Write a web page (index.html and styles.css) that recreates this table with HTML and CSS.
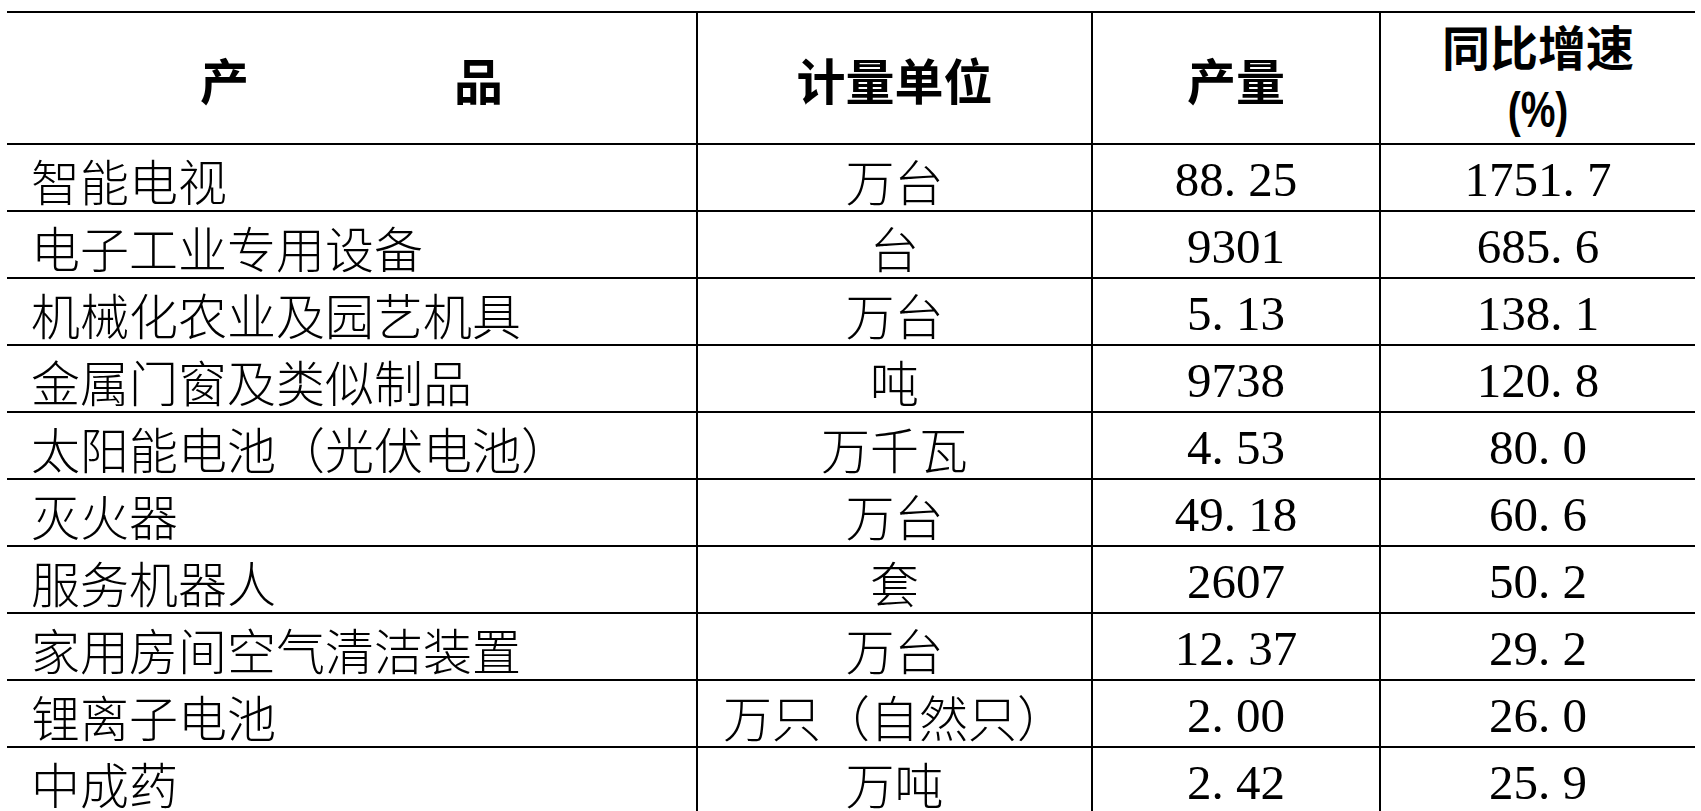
FILE: index.html
```html
<!DOCTYPE html>
<html lang="zh-CN">
<head>
<meta charset="utf-8">
<title>主要工业产品产量</title>
<link rel="stylesheet" href="styles.css">
</head>
<body>
<table class="sheet">
  <colgroup>
    <col class="c-name">
    <col class="c-unit">
    <col class="c-qty">
    <col class="c-rate">
  </colgroup>
  <thead>
    <tr class="head-row">
      <th class="h-name"><span class="h-ch">产</span><span class="h-ch">品</span></th>
      <th>计量单位</th>
      <th>产量</th>
      <th class="h-rate"><span class="h-line">同比增速</span><span class="h-pct">(%)</span></th>
    </tr>
  </thead>
  <tbody>
    <tr><td class="name">智能电视</td><td class="unit">万台</td><td class="num">88<span class="dot">.</span>25</td><td class="num">1751<span class="dot">.</span>7</td></tr>
    <tr><td class="name">电子工业专用设备</td><td class="unit">台</td><td class="num">9301</td><td class="num">685<span class="dot">.</span>6</td></tr>
    <tr><td class="name">机械化农业及园艺机具</td><td class="unit">万台</td><td class="num">5<span class="dot">.</span>13</td><td class="num">138<span class="dot">.</span>1</td></tr>
    <tr><td class="name">金属门窗及类似制品</td><td class="unit">吨</td><td class="num">9738</td><td class="num">120<span class="dot">.</span>8</td></tr>
    <tr><td class="name">太阳能电池（光伏电池）</td><td class="unit">万千瓦</td><td class="num">4<span class="dot">.</span>53</td><td class="num">80<span class="dot">.</span>0</td></tr>
    <tr><td class="name">灭火器</td><td class="unit">万台</td><td class="num">49<span class="dot">.</span>18</td><td class="num">60<span class="dot">.</span>6</td></tr>
    <tr><td class="name">服务机器人</td><td class="unit">套</td><td class="num">2607</td><td class="num">50<span class="dot">.</span>2</td></tr>
    <tr><td class="name">家用房间空气清洁装置</td><td class="unit">万台</td><td class="num">12<span class="dot">.</span>37</td><td class="num">29<span class="dot">.</span>2</td></tr>
    <tr><td class="name">锂离子电池</td><td class="unit">万只（自然只）</td><td class="num">2<span class="dot">.</span>00</td><td class="num">26<span class="dot">.</span>0</td></tr>
    <tr><td class="name">中成药</td><td class="unit">万吨</td><td class="num">2<span class="dot">.</span>42</td><td class="num">25<span class="dot">.</span>9</td></tr>
  </tbody>
</table>
</body>
</html>
```
FILE: styles.css
```css
html, body {
  margin: 0;
  padding: 0;
  background: #ffffff;
  color: #000000;
}

body {
  font-family: "Noto Sans CJK SC", "Noto Sans", sans-serif;
}

.sheet {
  border-collapse: collapse;
  table-layout: fixed;
  width: 1688px;
  margin: 11px 0 0 7px;
}

.c-name { width: 690px; }
.c-unit { width: 395px; }
.c-qty  { width: 288px; }
.c-rate { width: 315px; }

.sheet th,
.sheet td {
  border-top: 2px solid #000;
  border-bottom: 2px solid #000;
  padding: 0;
  white-space: nowrap;
}

.sheet th + th,
.sheet td + td {
  border-left: 2px solid #000;
}

.head-row {
  height: 132px;
}

.sheet th {
  font-family: "Noto Sans CJK SC", sans-serif;
  font-weight: 700;
  font-size: 49px;
  line-height: 1;
  text-align: center;
  vertical-align: middle;
}

.h-ch {
  display: inline-block;
}

.h-ch + .h-ch {
  margin-left: 205px;
}

.h-rate {
  padding-top: 4px;
}

.h-line,
.h-pct {
  display: block;
}

.h-line {
  font-size: 48px;
}

.h-pct {
  margin-top: 16px;
  font-family: "Liberation Sans", sans-serif;
  font-weight: 700;
  font-size: 50px;
  transform: scaleX(0.78);
}

.sheet tbody tr {
  height: 67px;
}

.sheet td {
  font-size: 49px;
  line-height: 1;
  vertical-align: middle;
  padding-top: 4px;
}

.sheet .name {
  font-family: "Noto Sans CJK SC", sans-serif;
  font-weight: 300;
  text-align: left;
  padding-left: 24px;
}

.unit {
  font-family: "Noto Sans CJK SC", sans-serif;
  font-weight: 300;
  text-align: center;
}

.num {
  font-family: "Liberation Serif", "Noto Sans CJK SC", serif;
  font-size: 48px;
  text-align: center;
}

.dot {
  display: inline-block;
  width: 0.5em;
  text-align: left;
}
```
